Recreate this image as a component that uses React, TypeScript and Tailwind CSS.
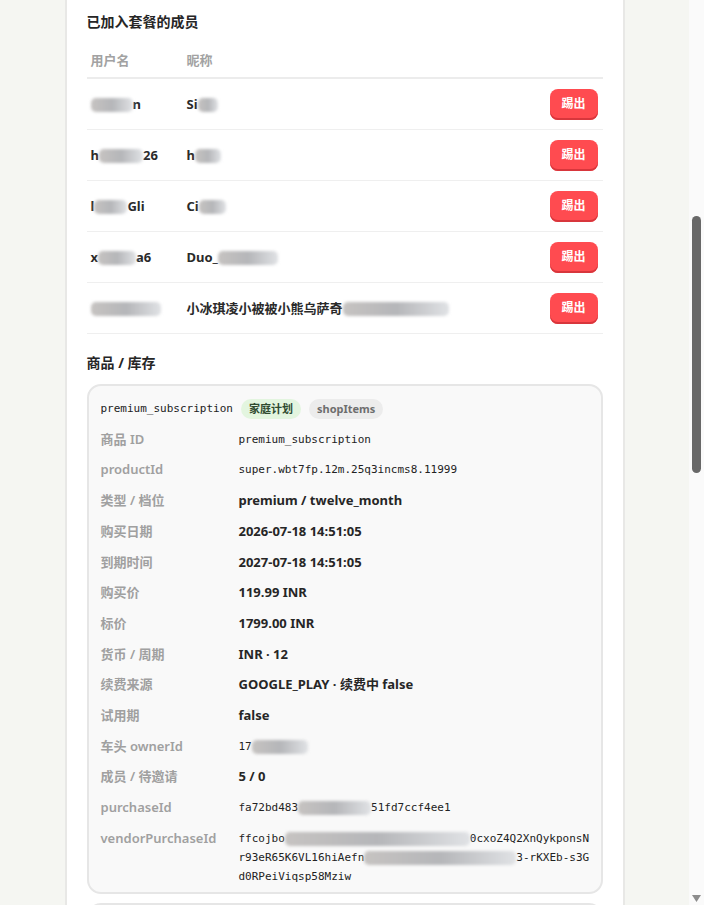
import React from "react";

const sans = "font-['Noto_Sans','Noto_Sans_CJK_SC',sans-serif]";
const mono = "font-['DejaVu_Sans_Mono','Noto_Sans_CJK_SC',monospace]";

// pixelated bits of hidden text
function Smudge({ className }: { className: string }) {
  return (
    <span
      className={`inline-block h-[14px] align-middle rounded-[5px] bg-linear-to-r from-[#c6c3c1] via-[#b5b6b9] to-[#e0e2e5] blur-[1.5px] ${className}`}
    />
  );
}

type Member = {
  user: React.ReactNode;
  nick: React.ReactNode;
};

const members: Member[] = [
  {
    user: (
      <>
        <Smudge className="w-[42px]" />n
      </>
    ),
    nick: (
      <>
        Si
        <Smudge className="w-[20px]" />
      </>
    ),
  },
  {
    user: (
      <>
        h<Smudge className="w-[44px]" />
        26
      </>
    ),
    nick: (
      <>
        h<Smudge className="w-[26px]" />
      </>
    ),
  },
  {
    user: (
      <>
        l<Smudge className="w-[33px]" />
        Gli
      </>
    ),
    nick: (
      <>
        Ci
        <Smudge className="w-[27px]" />
      </>
    ),
  },
  {
    user: (
      <>
        x<Smudge className="w-[38px]" />
        a6
      </>
    ),
    nick: (
      <>
        Duo_
        <Smudge className="w-[60px]" />
      </>
    ),
  },
  {
    user: <Smudge className="w-[70px]" />,
    nick: (
      <>
        小冰琪凌小被被小熊乌萨奇
        <Smudge className="w-[106px]" />
      </>
    ),
  },
];

type Field = { label: string; value: React.ReactNode; code?: boolean };

const fields: Field[] = [
  { label: "商品 ID", value: "premium_subscription", code: true },
  { label: "productId", value: "super.wbt7fp.12m.25q3incms8.11999", code: true },
  { label: "类型 / 档位", value: "premium / twelve_month" },
  { label: "购买日期", value: "2026-07-18 14:51:05" },
  { label: "到期时间", value: "2027-07-18 14:51:05" },
  { label: "购买价", value: "119.99 INR" },
  { label: "标价", value: "1799.00 INR" },
  { label: "货币 / 周期", value: "INR · 12" },
  { label: "续费来源", value: "GOOGLE_PLAY · 续费中 false" },
  { label: "试用期", value: "false" },
  {
    label: "车头 ownerId",
    code: true,
    value: (
      <>
        17
        <Smudge className="w-[56px]" />
      </>
    ),
  },
  { label: "成员 / 待邀请", value: "5 / 0" },
  {
    label: "purchaseId",
    code: true,
    value: (
      <>
        fa72bd483
        <Smudge className="w-[73px]" />
        51fd7ccf4ee1
      </>
    ),
  },
  {
    label: "vendorPurchaseId",
    code: true,
    value: (
      <>
        <div>
          ffcojbo
          <Smudge className="w-[185px]" />
          0cxoZ4Q2XnQykponsN
        </div>
        <div>
          r93eR65K6VL16hiAefn
          <Smudge className="w-[152px]" />
          3-rKXEb-s3G
        </div>
        <div>d0RPeiViqsp58Mziw</div>
      </>
    ),
  },
];

function KickButton() {
  return (
    <button className="flex h-[31px] w-[48px] items-center justify-center rounded-[8px] bg-[#ff4b50] text-[12px] font-bold text-white shadow-[inset_0_-2px_0_#d8363c]">
      踢出
    </button>
  );
}

function MemberTable() {
  return (
    <div>
      <div className="mt-[11px] flex h-[36px] items-center border-b-2 border-[#ececec] pt-[2px] text-[13px] font-semibold text-[#a2a2a2]">
        <div className="w-[96px] pl-1">用户名</div>
        <div className="flex-1 pl-1">昵称</div>
      </div>
      {members.map((m, i) => (
        <div
          key={i}
          className="flex h-[51px] items-center border-b border-[#efefef] text-[13px] font-bold text-[#2a2a2a]"
        >
          <div className="w-[96px] whitespace-nowrap pl-1 pt-[1px]">{m.user}</div>
          <div className="flex-1 whitespace-nowrap pl-1 pt-[1px]">{m.nick}</div>
          <div className="pr-[5px]">
            <KickButton />
          </div>
        </div>
      ))}
    </div>
  );
}

function ProductBox() {
  return (
    <div className="mt-[11px] rounded-[14px] border-2 border-[#e6e6e6] bg-[#f9f9f9] px-[12px] pt-[13px]">
      <div className="flex h-[20px] items-center gap-2">
        <span className={`${mono} text-[11px] text-[#222]`}>premium_subscription</span>
        <span className="flex h-[20px] items-center rounded-full bg-[#e3f5df] px-2 text-[11px] font-bold text-[#2f4a2f]">
          家庭计划
        </span>
        <span className="flex h-[20px] items-center rounded-full bg-[#ececec] px-[8px] text-[11px] font-bold text-[#6e6e6e]">
          shopItems
        </span>
      </div>
      <div className="mt-[5px]">
        {fields.map((f) => (
          <div key={f.label} className="flex py-[5.75px] leading-[19.2px]">
            <div className="w-[138px] shrink-0 text-[13px] font-semibold text-[#a0a0a0]">{f.label}</div>
            <div
              className={
                f.code
                  ? `${mono} min-w-0 flex-1 whitespace-nowrap text-[11px] text-[#222]`
                  : "min-w-0 flex-1 text-[13px] font-bold text-[#262626]"
              }
            >
              {f.value}
            </div>
          </div>
        ))}
      </div>
    </div>
  );
}

function Scrollbar() {
  return (
    <div className="flex h-[905px] w-[15px] shrink-0 flex-col items-center bg-[#fafafa]">
      <div className="mt-[216px] h-[257px] w-[9px] rounded-full bg-[#686868]" />
      <svg className="mt-auto mb-[3px]" width="9" height="7" viewBox="0 0 9 7">
        <path d="M0 0 H9 L4.5 7 Z" fill="#8c8c8c" />
      </svg>
    </div>
  );
}

export default function App() {
  return (
    <div className={`${sans} flex h-[905px] overflow-hidden bg-[#f5f6f2]`}>
      <div className="flex flex-1 justify-center">
        <div className="h-[1100px] w-[560px] border-x-2 border-[#e8e8e6] bg-white px-5">
          <h2 className="pt-[12px] text-[14px] font-bold leading-[20px] text-[#262626]">已加入套餐的成员</h2>
          <MemberTable />
          <h2 className="mt-[19px] text-[14px] font-bold leading-[20px] text-[#262626]">商品 / 库存</h2>
          <ProductBox />
          <div className="mt-[9px] h-[200px] rounded-[14px] border-2 border-[#e6e6e6] bg-[#f9f9f9]" />
        </div>
      </div>
      <Scrollbar />
    </div>
  );
}
